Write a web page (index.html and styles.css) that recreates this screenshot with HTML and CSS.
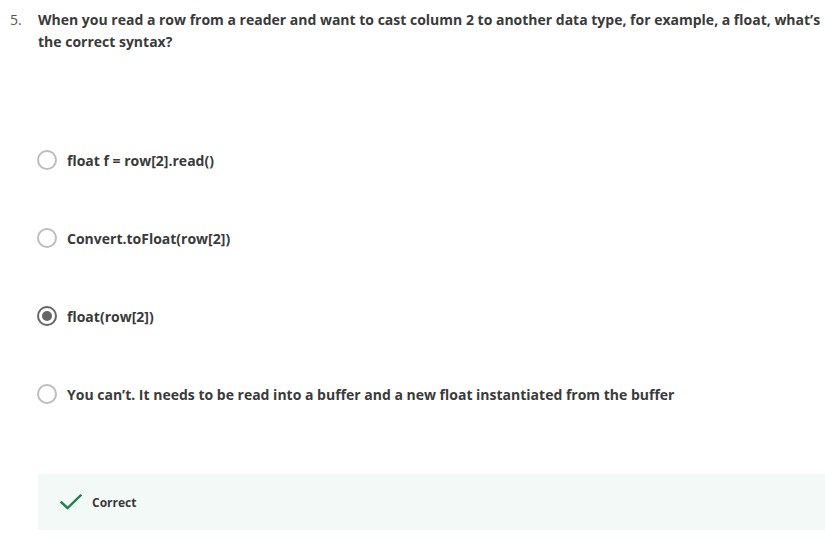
FILE: index.html
```html
<!DOCTYPE html>
<html>
<head>
<meta charset="utf-8">
<link rel="stylesheet" href="styles.css">
</head>
<body>
<div class="page">
  <div class="question">
    <span class="num">5.</span>
    <span class="qtext">When you read a row from a reader and want to cast column 2 to another data type, for example, a float, what’s the correct syntax?</span>
  </div>
  <div class="options">
    <div class="option"><span class="radio"></span><span class="label">float f = row[2].read()</span></div>
    <div class="option"><span class="radio"></span><span class="label">Convert.toFloat(row[2])</span></div>
    <div class="option"><span class="radio checked"></span><span class="label">float(row[2])</span></div>
    <div class="option"><span class="radio"></span><span class="label">You can’t. It needs to be read into a buffer and a new float instantiated from the buffer</span></div>
  </div>
  <div class="feedback">
    <svg class="check" width="22" height="16" viewBox="0 0 22 16"><path d="M1.5 8.5 L7.5 14 L20.5 1.5" fill="none" stroke="#1f8354" stroke-width="2.4" stroke-linecap="square"/></svg>
    <span class="fb-text">Correct</span>
  </div>
</div>
</body>
</html>
```
FILE: styles.css
```css
html, body {
  margin: 0;
  padding: 0;
  background: #fff;
}
body {
  font-family: "Open Sans", "Liberation Sans", sans-serif;
  color: #333;
}
.page {
  padding: 9px 0 0 10px;
}
.question {
  display: flex;
  font-size: 14px;
  line-height: 22px;
}
.num {
  width: 28px;
  flex: none;
  color: #555;
}
.qtext {
  font-weight: 700;
  color: #3a3a3a;
}
.options {
  display: flex;
  flex-direction: column;
  margin-top: 68px;
  padding-left: 27px;
}
.option {
  display: flex;
  align-items: center;
  height: 78px;
  gap: 10px;
}
.radio {
  box-sizing: border-box;
  width: 20px;
  height: 20px;
  border: 2px solid #bdbdbd;
  border-radius: 50%;
  flex: none;
  display: flex;
  align-items: center;
  justify-content: center;
}
.radio.checked {
  border-color: #666;
}
.radio.checked::after {
  content: "";
  width: 10px;
  height: 10px;
  border-radius: 50%;
  background: #666;
}
.label {
  font-size: 14px;
  font-weight: 700;
  color: #3a3a3a;
}
.feedback {
  margin-top: 41px;
  margin-left: 28px;
  height: 56px;
  background: #f3f9f7;
  display: flex;
  align-items: center;
  padding-left: 22px;
  gap: 10px;
}
.check {
  flex: none;
}
.fb-text {
  font-size: 12px;
  font-weight: 700;
  color: #3a3a3a;
}
```
